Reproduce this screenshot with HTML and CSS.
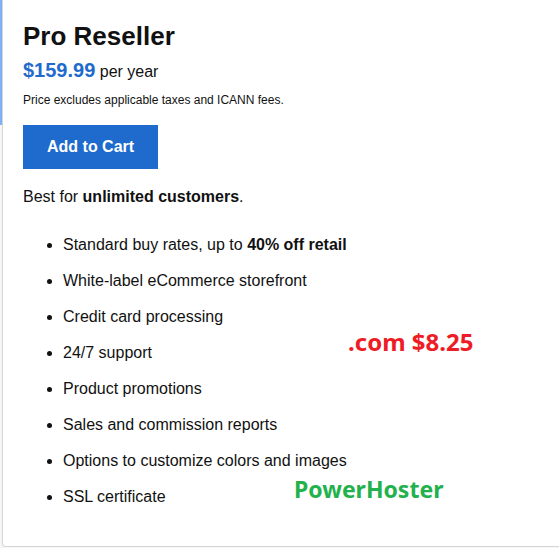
FILE: index.html
```html
<!DOCTYPE html>
<html>

<head>
    <meta charset="utf-8" />
    <title>Pro Reseller</title>
    <meta name="viewport" content="width=device-width, initial-scale=1">
    <link rel="stylesheet" href="styles.css">
</head>

<body>
    <div class="page">
        <!-- 左边的蓝色高亮条 -->
        <div class="focus-bar"></div>
        <div class="plan">
            <h1 class="plan-title">Pro Reseller</h1>
            <p class="plan-price"><strong>$159.99</strong> per year</p>
            <p class="plan-note">Price excludes applicable taxes and ICANN fees.</p>
            <button type="button" class="cart-btn">Add to Cart</button>
            <p class="plan-best">Best for <strong>unlimited customers</strong>.</p>
            <ul class="plan-features">
                <li>Standard buy rates, up to <strong>40% off retail</strong></li>
                <li>White-label eCommerce storefront</li>
                <li>Credit card processing</li>
                <li>24/7 support</li>
                <li>Product promotions</li>
                <li>Sales and commission reports</li>
                <li>Options to customize colors and images</li>
                <li>SSL certificate</li>
            </ul>
            <!-- 叠在内容上面的文字 -->
            <span class="stamp stamp-price">.com $8.25</span>
            <span class="stamp stamp-brand">PowerHoster</span>
        </div>
    </div>
</body>

</html>
```

FILE: styles.css
```css
body {
  margin: 0;
  background: #f6f6f6;
  font-family: "Liberation Sans", Arial, sans-serif;
  color: #111;
}

.page {
  position: relative;
  height: 548px;
  overflow: hidden;
}

.focus-bar {
  position: absolute;
  left: 0;
  top: 0;
  width: 2px;
  height: 125px;
  background: #7fb0f5;
}

.plan {
  position: relative;
  margin-left: 2px;
  width: 570px;
  box-sizing: border-box;
  padding: 21px 20px 40px 20px;
  background: #fff;
  border: 1px solid #d6d6d6;
  border-top: none;
  border-bottom-left-radius: 4px;
}

.plan-title {
  margin: 0;
  font-size: 26px;
  line-height: 30px;
  font-weight: bold;
}

.plan-price {
  margin: 8px 0 0;
  font-size: 16px;
  line-height: 23px;
}

.plan-price strong {
  font-size: 20px;
  color: #1e6bcd;
}

.plan-note {
  margin: 10px 0 0;
  font-size: 12px;
  line-height: 14px;
}

.cart-btn {
  display: block;
  margin-top: 18px;
  padding: 13px 24px;
  border: none;
  border-radius: 0;
  background: #1e6bcd;
  color: #fff;
  font: bold 16px/18px "Liberation Sans", Arial, sans-serif;
}

.plan-best {
  margin: 19px 0 0;
  font-size: 16px;
  line-height: 18px;
}

.plan-features {
  margin: 30px 0 0;
  padding-left: 40px;
  font-size: 16px;
  line-height: 18px;
}

.plan-features li + li {
  margin-top: 18px;
}

.stamp {
  position: absolute;
  font-family: "Noto Sans", "Open Sans", sans-serif;
  font-weight: bold;
  white-space: nowrap;
}

.stamp-price {
  left: 345px;
  top: 325px;
  font-size: 24px;
  color: #ee1c25;
}

.stamp-brand {
  left: 291px;
  top: 473px;
  font-size: 23px;
  color: #22b14c;
}
```
